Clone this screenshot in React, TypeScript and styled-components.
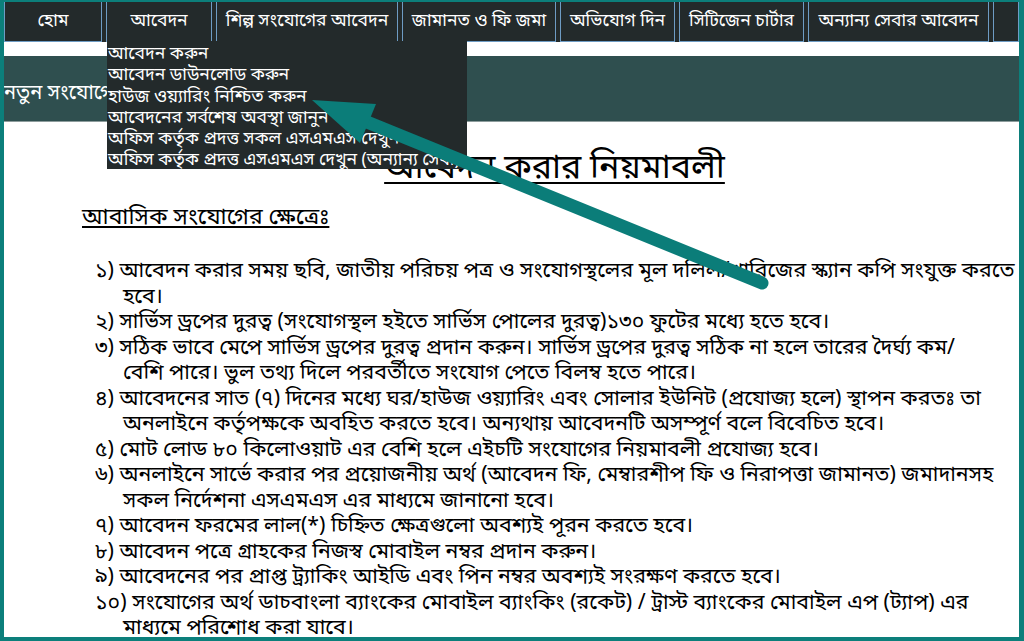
import React from "react";
import styled, { createGlobalStyle } from "styled-components";

const GlobalStyle = createGlobalStyle`
  html, body {
    margin: 0;
    padding: 0;
    background: #ffffff;
  }
  body {
    font-family: "Noto Sans Bengali", "Lohit Bengali", "Noto Sans", "Liberation Sans", sans-serif;
  }
`;

const Frame = styled("div")`
  position: relative;
  width: 1024px;
  height: 641px;
  box-sizing: border-box;
  border: 4px solid #0c7f7b;
  border-top-width: 2px;
  border-right-width: 5px;
  background: #ffffff;
  overflow: hidden;
`;

const NavBar = styled("nav")`
  display: flex;
  gap: 4px;
  height: 40px;
  background: #232a2b;
`;

const NavItem = styled("div")<{ $w?: number }>`
  position: relative;
  box-sizing: border-box;
  width: ${(p) => (p.$w ? `${p.$w}px` : "auto")};
  flex: ${(p) => (p.$w ? "none" : "1")};
  display: flex;
  align-items: center;
  justify-content: center;
  border: 1px solid #6e9cc4;
  border-top: none;
  color: #ffffff;
  font-size: 17.5px;
  white-space: nowrap;
`;

const Dropdown = styled("ul")`
  position: absolute;
  top: 100%;
  left: 0;
  z-index: 5;
  box-sizing: border-box;
  width: 360px;
  height: 128px;
  margin: 0;
  padding: 3px 0 0;
  list-style: none;
  background: #232a2b;
  overflow: hidden;
`;

const DropItem = styled("li")`
  height: 21.3px;
  line-height: 21.3px;
  padding-left: 1px;
  color: #ffffff;
  font-size: 17.5px;
  white-space: nowrap;
`;

const WhiteGap = styled("div")`
  height: 14px;
`;

const Band = styled("div")`
  display: flex;
  align-items: center;
  box-sizing: border-box;
  height: 66px;
  padding-top: 10px;
  border-bottom: 1px solid #8d9c9c;
  background: #2f4f4f;
  color: #ffffff;
  font-size: 20px;
  white-space: nowrap;
`;

const Heading = styled("h1")`
  margin: 27px 0 0;
  padding-left: 86px;
  text-align: center;
  font-size: 34px;
  font-weight: normal;
  line-height: 42px;
  text-decoration: underline;
  text-underline-offset: 4px;
  text-decoration-thickness: 2px;
  color: #000000;
`;

const SubHeading = styled("h2")`
  margin: 12px 0 0 78px;
  font-size: 23px;
  font-weight: normal;
  line-height: 30px;
  text-decoration: underline;
  color: #000000;
`;

const Rules = styled("ol")`
  margin: 26px 0 0 91px;
  padding: 0;
  list-style: none;
`;

const Rule = styled("li")`
  padding-left: 28px;
  text-indent: -28px;
  font-size: 21.3px;
  line-height: 25.5px;
  color: #000000;
  white-space: nowrap;
`;

const ArrowLayer = styled("svg")`
  position: absolute;
  top: -2px;
  left: -4px;
  z-index: 10;
  pointer-events: none;
`;

const navItems: { label: string; w?: number; menu?: boolean }[] = [
  { label: "হোম", w: 98 },
  { label: "আবেদন", w: 106, menu: true },
  { label: "শিল্প সংযোগের আবেদন", w: 182 },
  { label: "জামানত ও ফি জমা", w: 154 },
  { label: "অভিযোগ দিন", w: 115 },
  { label: "সিটিজেন চার্টার", w: 125 },
  { label: "অন্যান্য সেবার আবেদন", w: 181 },
  { label: "" },
];

const menuItems = [
  "আবেদন করুন",
  "আবেদন ডাউনলোড করুন",
  "হাউজ ওয়্যারিং নিশ্চিত করুন",
  "আবেদনের সর্বশেষ অবস্থা জানুন",
  "অফিস কর্তৃক প্রদত্ত সকল এসএমএস দেখুন",
  "অফিস কর্তৃক প্রদত্ত এসএমএস দেখুন (অন্যান্য সেবা)",
];

const rules: string[][] = [
  [
    "১) আবেদন করার সময় ছবি, জাতীয় পরিচয় পত্র ও সংযোগস্থলের মূল দলিল/খারিজের স্ক্যান কপি সংযুক্ত করতে",
    "হবে।",
  ],
  ["২) সার্ভিস ড্রপের দুরত্ব (সংযোগস্থল হইতে সার্ভিস পোলের দুরত্ব)১৩০ ফুটের মধ্যে হতে হবে।"],
  [
    "৩) সঠিক ভাবে মেপে সার্ভিস ড্রপের দুরত্ব প্রদান করুন। সার্ভিস ড্রপের দুরত্ব সঠিক না হলে তারের দৈর্ঘ্য কম/",
    "বেশি পারে। ভুল তথ্য দিলে পরবর্তীতে সংযোগ পেতে বিলম্ব হতে পারে।",
  ],
  [
    "৪) আবেদনের সাত (৭) দিনের মধ্যে ঘর/হাউজ ওয়্যারিং এবং সোলার ইউনিট (প্রযোজ্য হলে) স্থাপন করতঃ তা",
    "অনলাইনে কর্তৃপক্ষকে অবহিত করতে হবে। অন্যথায় আবেদনটি অসম্পূর্ণ বলে বিবেচিত হবে।",
  ],
  ["৫) মোট লোড ৮০ কিলোওয়াট এর বেশি হলে এইচটি সংযোগের নিয়মাবলী প্রযোজ্য হবে।"],
  [
    "৬) অনলাইনে সার্ভে করার পর প্রয়োজনীয় অর্থ (আবেদন ফি, মেম্বারশীপ ফি ও নিরাপত্তা জামানত) জমাদানসহ",
    "সকল নির্দেশনা এসএমএস এর মাধ্যমে জানানো হবে।",
  ],
  ["৭) আবেদন ফরমের লাল(*) চিহ্নিত ক্ষেত্রগুলো অবশ্যই পূরন করতে হবে।"],
  ["৮) আবেদন পত্রে গ্রাহকের নিজস্ব মোবাইল নম্বর প্রদান করুন।"],
  ["৯) আবেদনের পর প্রাপ্ত ট্র্যাকিং আইডি এবং পিন নম্বর অবশ্যই সংরক্ষণ করতে হবে।"],
  [
    "১০) সংযোগের অর্থ ডাচবাংলা ব্যাংকের মোবাইল ব্যাংকিং (রকেট) / ট্রাস্ট ব্যাংকের মোবাইল এপ (ট্যাপ) এর",
    "মাধ্যমে পরিশোধ করা যাবে।",
  ],
];

const App: React.FC = () => {
  return (
    <>
      <GlobalStyle />
      <Frame>
        <NavBar>
          {navItems.map((item, i) => (
            <NavItem key={i} $w={item.w}>
              {item.label}
              {item.menu && (
                <Dropdown>
                  {menuItems.map((m) => (
                    <DropItem key={m}>{m}</DropItem>
                  ))}
                </Dropdown>
              )}
            </NavItem>
          ))}
        </NavBar>
        <WhiteGap />
        <Band>নতুন সংযোগের আবেদন</Band>

        <Heading>আবেদন করার নিয়মাবলী</Heading>
        <SubHeading>আবাসিক সংযোগের ক্ষেত্রেঃ</SubHeading>

        <Rules>
          {rules.map((lines, i) => (
            <Rule key={i}>
              {lines.map((line, j) => (
                <React.Fragment key={j}>
                  {j > 0 && <br />}
                  {line}
                </React.Fragment>
              ))}
            </Rule>
          ))}
        </Rules>

        {/* teal pointer drawn over the page */}
        <ArrowLayer width="1024" height="641" viewBox="0 0 1024 641">
          <line
            x1="762"
            y1="283"
            x2="362"
            y2="120"
            stroke="#0b7d79"
            strokeWidth="13"
            strokeLinecap="round"
          />
          <polygon points="312,100 376,104 360,143" fill="#0b7d79" />
        </ArrowLayer>
      </Frame>
    </>
  );
};

export default App;
